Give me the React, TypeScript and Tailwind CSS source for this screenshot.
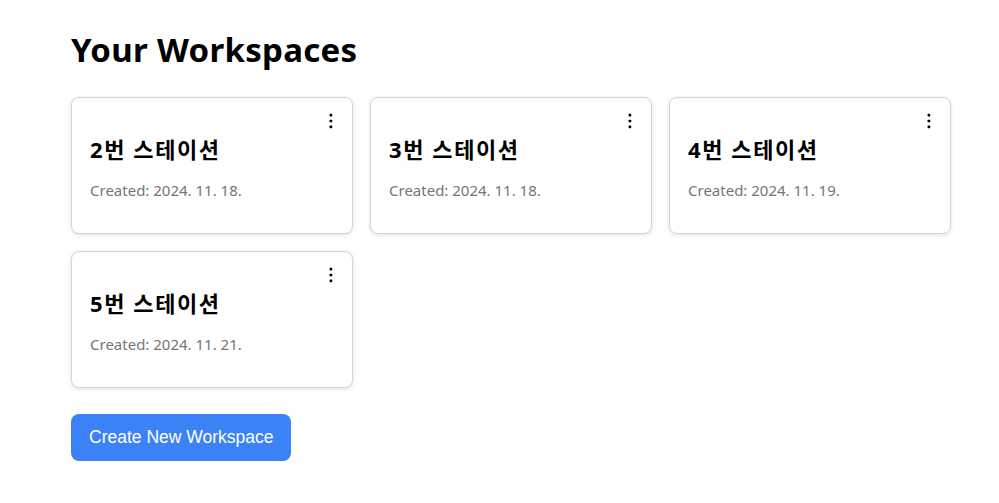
import React from "react";

interface Workspace {
  id: number;
  name: string;
  created: string;
}

const workspaces: Workspace[] = [
  { id: 2, name: "2번 스테이션", created: "2024. 11. 18." },
  { id: 3, name: "3번 스테이션", created: "2024. 11. 18." },
  { id: 4, name: "4번 스테이션", created: "2024. 11. 19." },
  { id: 5, name: "5번 스테이션", created: "2024. 11. 21." },
];

const DotsIcon = () => (
  <svg width="6" height="18" viewBox="0 0 6 18" fill="currentColor">
    <rect x="1.6" y="1.8" width="2.6" height="2.6" rx="0.6" />
    <rect x="1.6" y="7.7" width="2.6" height="2.6" rx="0.6" />
    <rect x="1.6" y="13.6" width="2.6" height="2.6" rx="0.6" />
  </svg>
);

const WorkspaceCard: React.FC<{ ws: Workspace }> = ({ ws }) => (
  <div className="relative h-[137px] rounded-lg border border-gray-300 bg-white px-[18px] pt-[34px] shadow-[0_1px_4px_rgba(0,0,0,0.12)]">
    <button className="absolute right-[18px] top-[14px] flex items-center justify-center text-black">
      <DotsIcon />
    </button>
    <h2 className="text-[22px] font-bold leading-[34px] tracking-[1.6px] text-black">{ws.name}</h2>
    <p className="mt-[14px] text-[15px] leading-[20px] text-[#757575]">Created: {ws.created}</p>
  </div>
);

export default function App() {
  return (
    <div
      className="min-h-screen bg-white px-[71px] pt-[26px]"
      style={{ fontFamily: '"Noto Sans", "Noto Sans CJK KR", sans-serif' }}
    >
      <h1 className="text-[33px] font-bold leading-[48px] tracking-[0.3px] text-black">Your Workspaces</h1>
      <div className="mt-[23px] grid w-[880px] grid-cols-3 gap-x-[17px] gap-y-[17px]">
        {workspaces.map((ws) => (
          <WorkspaceCard key={ws.id} ws={ws} />
        ))}
      </div>
      <button
        className="mt-[26px] h-[47px] rounded-lg bg-[#3b82f6] px-[18px] text-[17.5px] text-white"
        style={{ fontFamily: '"Liberation Sans", Arial, sans-serif' }}
      >
        Create New Workspace
      </button>
    </div>
  );
}
